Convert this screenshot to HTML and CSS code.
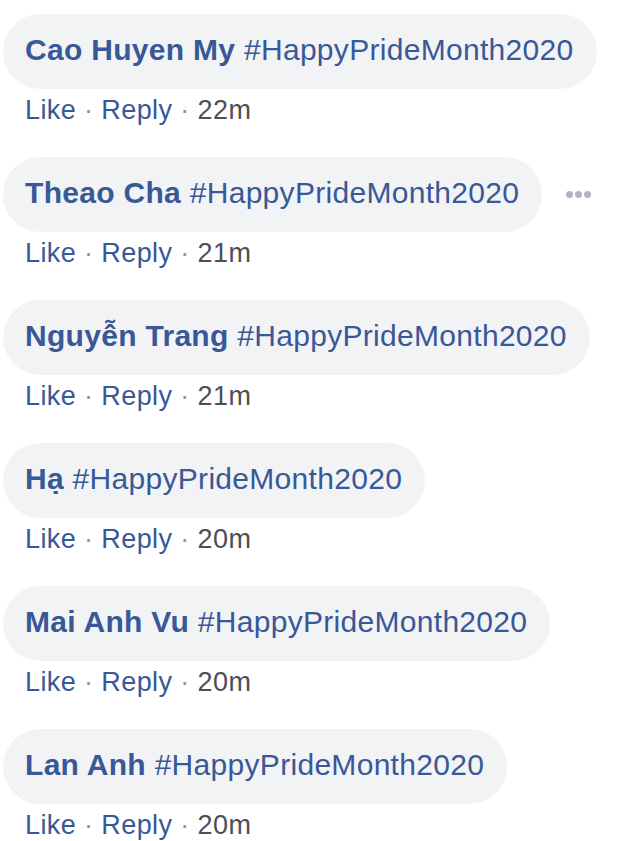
FILE: index.html
```html
<!DOCTYPE html>
<html>
<head>
<meta charset="utf-8">
<link rel="stylesheet" href="styles.css">
</head>
<body>
<div class="list">
  <div class="comment">
    <div class="row"><div class="bubble"><span class="name">Cao Huyen My</span> <span class="tag">#HappyPrideMonth2020</span></div></div>
    <div class="actions"><span class="link">Like</span> · <span class="link">Reply</span> · <span class="time">22m</span></div>
  </div>
  <div class="comment">
    <div class="row"><div class="bubble"><span class="name">Theao Cha</span> <span class="tag">#HappyPrideMonth2020</span></div>
      <div class="more"><span></span><span></span><span></span></div></div>
    <div class="actions"><span class="link">Like</span> · <span class="link">Reply</span> · <span class="time">21m</span></div>
  </div>
  <div class="comment">
    <div class="row"><div class="bubble"><span class="name">Nguyễn Trang</span> <span class="tag">#HappyPrideMonth2020</span></div></div>
    <div class="actions"><span class="link">Like</span> · <span class="link">Reply</span> · <span class="time">21m</span></div>
  </div>
  <div class="comment">
    <div class="row"><div class="bubble"><span class="name">Hạ</span> <span class="tag">#HappyPrideMonth2020</span></div></div>
    <div class="actions"><span class="link">Like</span> · <span class="link">Reply</span> · <span class="time">20m</span></div>
  </div>
  <div class="comment">
    <div class="row"><div class="bubble"><span class="name">Mai Anh Vu</span> <span class="tag">#HappyPrideMonth2020</span></div></div>
    <div class="actions"><span class="link">Like</span> · <span class="link">Reply</span> · <span class="time">20m</span></div>
  </div>
  <div class="comment">
    <div class="row"><div class="bubble"><span class="name">Lan Anh</span> <span class="tag">#HappyPrideMonth2020</span></div></div>
    <div class="actions"><span class="link">Like</span> · <span class="link">Reply</span> · <span class="time">20m</span></div>
  </div>
</div>
</body>
</html>
```
FILE: styles.css
```css
html, body {
  margin: 0;
  padding: 0;
  background: #ffffff;
}
body {
  font-family: "Liberation Sans", Arial, sans-serif;
}
.list {
  display: flex;
  flex-direction: column;
  gap: 28px;
  padding: 14px 0 0 3px;
}
.comment {
  display: flex;
  flex-direction: column;
}
.row {
  display: flex;
  align-items: center;
  gap: 24px;
}
.bubble {
  box-sizing: border-box;
  background: #f2f3f5;
  border-radius: 38px;
  height: 75px;
  line-height: 71px;
  padding: 0 23px 4px 22px;
  font-size: 30px;
  letter-spacing: 0.3px;
  white-space: nowrap;
  color: #385898;
}
.name {
  font-weight: bold;
}
.tag {
  color: #385898;
}
.actions {
  padding: 3px 0 0 22px;
  height: 37px;
  font-size: 27px;
  letter-spacing: 0.4px;
  line-height: 36px;
  color: #90949c;
}
.link {
  color: #385898;
}
.time {
  color: #4b4f56;
}
.more {
  display: flex;
  gap: 2px;
}
.more span {
  width: 7px;
  height: 7px;
  border-radius: 50%;
  background: #b0b3c8;
}
```
